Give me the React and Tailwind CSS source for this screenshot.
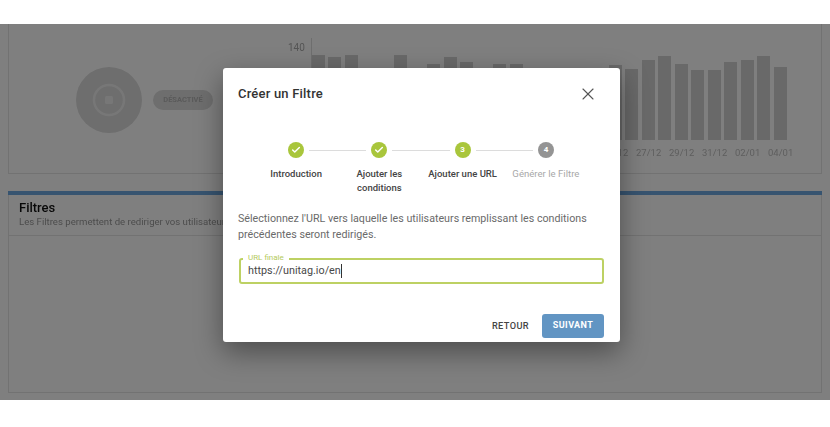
import React from "react";
import { X, Check } from "lucide-react";

const bars = [85,83,85,0,0,85,0,76,83,78,0,76,76,0,70,0,0,0,75,71,80,84,76,70,70,78,80,84,73];
const dates = ["25/12","27/12","29/12","31/12","02/01","04/01"];
const steps = ["Introduction","Ajouter les conditions","Ajouter une URL","Générer le Filtre"];

function Dot({ bg, children }) {
  return <div className={"flex h-4 w-4 shrink-0 items-center justify-center rounded-full text-[8px] font-bold text-white " + bg}>{children}</div>;
}
function Line() {
  return <div className="mx-[5px] h-px flex-1 bg-[#dcdcdc]" />;
}

export default function App() {
  return (
    <div className="h-[427px] w-[830px] overflow-hidden bg-white pt-6 font-['Roboto',sans-serif]">
      <div className="relative h-[376px] overflow-hidden bg-white">
        <div className="flex h-full flex-col gap-[17px] px-2 pb-[7px] blur-[0.7px]">
          <section className="flex h-[150px] shrink-0 items-start border border-t-0 border-[#e4e4e4]">
            <div className="ml-[67px] mt-[43px] flex items-center gap-[11px]">
              <svg width="66" height="66" viewBox="0 0 66 66">
                <circle cx="33" cy="33" r="33" fill="#dcdcdc" />
                <circle cx="33" cy="33" r="15" fill="none" stroke="#efefef" strokeWidth="2.5" />
                <rect x="29" y="29" width="8" height="8" rx="1.5" fill="#efefef" />
              </svg>
              <span className="flex h-5 w-[60px] items-center justify-center rounded-full bg-[#dcdcdc] text-[7.5px] font-bold text-[#b4b4b4]">DÉSACTIVÉ</span>
            </div>
            <div className="ml-[75px] flex flex-col">
              <div className="flex h-[116px]">
                <div className="mr-[6px] mt-[18px] text-[10px] leading-3 text-[#aaaaaa]">140</div>
                <div className="mt-[14px] flex items-end gap-[3.5px] border-l border-[#dddddd]">
                  {bars.map((h, i) => (
                    <div key={i} className="w-[13px] bg-[#d2d2d2]" style={{ height: h }} />
                  ))}
                </div>
              </div>
              <div className="ml-[315px] mt-[7px] flex gap-[8px] text-[9.5px] leading-3 text-[#bdbdbd]">
                {dates.map((d) => <span key={d} className="w-[25px] shrink-0">{d}</span>)}
              </div>
            </div>
          </section>
          <section className="flex-1 border border-t-0 border-[#e4e4e4]">
            <div className="-mx-px h-1 bg-[#6ea8e0]" />
            <header className="h-[41px] border-b border-[#e4e4e4] pl-[10px] pt-[4px]">
              <h2 className="text-[13px] font-medium leading-[17px] text-[#111111]">Filtres</h2>
              <p className="text-[9.6px] leading-[11px] text-[#999999]">Les Filtres permettent de rediriger vos utilisateurs</p>
            </header>
          </section>
        </div>
        <div className="absolute inset-0 bg-black/50" />
        <div className="absolute left-[223px] top-[44px] flex h-[274px] w-[397px] flex-col rounded-[3px] bg-white pl-[15px] pr-4 shadow-[0_10px_28px_rgba(0,0,0,0.4)]">
          <div className="mt-[15px] flex h-[22px] items-center justify-between pr-[6px]">
            <h1 className="text-[13px] font-medium leading-[18px] tracking-[0.2px] text-[#333333]">Créer un Filtre</h1>
            <X size={20} strokeWidth={1.3} className="text-[#555555]" />
          </div>
          <div className="mx-auto mt-[37px] flex w-[266px] items-center">
            <Dot bg="bg-[#a9c63c]"><Check size={10} strokeWidth={3.5} /></Dot>
            <Line />
            <Dot bg="bg-[#a9c63c]"><Check size={10} strokeWidth={3.5} /></Dot>
            <Line />
            <Dot bg="bg-[#a9c63c]">3</Dot>
            <Line />
            <Dot bg="bg-[#949494]">4</Dot>
          </div>
          <div className="mx-auto mt-[9px] grid w-[333px] grid-cols-4">
            {steps.map((s, i) => (
              <div key={s} className={"px-[6px] text-center leading-[14px] " + (i === 3 ? "text-[9.6px] font-normal text-[#a8a8a8]" : "text-[9.5px] font-medium text-[#444444]")}>
                <span className={i === 1 ? "" : "whitespace-nowrap"}>{s}</span>
              </div>
            ))}
          </div>
          <p className="mt-4 text-[10.7px] leading-4 text-[#6a6a6a]">
            Sélectionnez l'URL vers laquelle les utilisateurs remplissant les conditions précédentes seront redirigés.
          </p>
          <div className="relative ml-px mt-[15px] flex h-[26px] items-center rounded-[3px] border-2 border-[#bdd163] pl-[7px]">
            <span className="absolute -top-[7px] left-[2px] bg-white px-[5px] text-[8px] leading-[10px] text-[#b5cb5c]">URL finale</span>
            <span className="text-[10.8px] text-[#484848]">https://unitag.io/en</span>
            <span className="h-[14px] w-px bg-[#333333]" />
          </div>
          <div className="mt-[30px] flex items-center justify-end gap-[13px]">
            <button className="text-[9.2px] font-medium tracking-[0.4px] text-[#444444]">RETOUR</button>
            <button className="h-6 w-[62px] rounded-[3px] bg-[#6295c3] text-[9px] font-bold tracking-[0.4px] text-white">SUIVANT</button>
          </div>
        </div>
      </div>
    </div>
  );
}
